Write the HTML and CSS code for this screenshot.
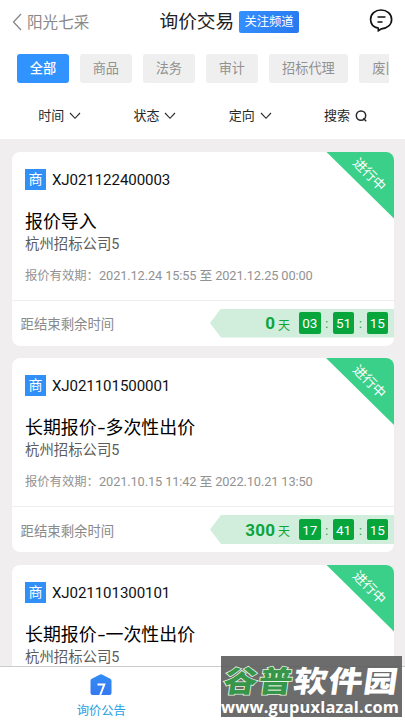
FILE: index.html
```
<!DOCTYPE html>
<html lang="zh-CN">
<head>
<meta charset="utf-8">
<title>询价交易</title>
<link rel="stylesheet" href="styles.css">
</head>
<body>
<div class="app">
  <header class="top">
    <div class="bar">
      <a class="back"><svg width="10" height="18" viewBox="0 0 10 18"><path d="M9 1 1.500 9 9 17"/></svg><span>阳光七采</span></a>
      <h1>询价交易</h1>
      <span class="follow">关注频道</span>
      <svg class="chat" width="24" height="24" viewBox="0 0 24 24"><path d="M9.200 20.200C4.700 19.200 1.600 15.900 1.600 11.500 1.600 6 6.200 2 12 2s10.600 4 10.600 9.500c0 5.200-4.200 8.700-10.200 9.300l-3 1.900z"/><path d="M8.500 9h8M8.500 14h5"/></svg>
    </div>
    <nav class="tabs">
      <span class="tab on">全部</span><span class="tab">商品</span><span class="tab">法务</span><span class="tab">审计</span><span class="tab wide">招标代理</span><span class="tab wide">废旧物资</span>
    </nav>
    <div class="filters">
      <span>时间<svg width="12" height="8" viewBox="0 0 12 8"><path d="m1 1 5 5.300L11 1"/></svg></span>
      <span>状态<svg width="12" height="8" viewBox="0 0 12 8"><path d="m1 1 5 5.300L11 1"/></svg></span>
      <span>定向<svg width="12" height="8" viewBox="0 0 12 8"><path d="m1 1 5 5.300L11 1"/></svg></span>
      <span>搜索<svg class="find" width="12" height="12" viewBox="0 0 12 12"><circle cx="6" cy="5.600" r="4.700"/><path d="m8.300 8.300 2.900 2.900"/></svg></span>
    </div>
  </header>
  <main class="list">
    <article class="card">
      <div class="ribbon"><span>进行中</span></div>
      <div class="info">
        <div class="code"><i>商</i><b>XJ021122400003</b></div>
        <h2>报价导入</h2>
        <p class="org">杭州招标公司5</p>
        <p class="valid"><span>报价有效期：</span>2021.12.24 15:55 至 2021.12.25 00:00</p>
      </div>
      <div class="remain"><span class="label">距结束剩余时间</span>
        <div class="count"><strong>0</strong><em>天</em><u>03</u><s>:</s><u>51</u><s>:</s><u>15</u></div>
      </div>
    </article>
    <article class="card">
      <div class="ribbon"><span>进行中</span></div>
      <div class="info">
        <div class="code"><i>商</i><b>XJ021101500001</b></div>
        <h2>长期报价<span class="dash">-</span>多次性出价</h2>
        <p class="org">杭州招标公司5</p>
        <p class="valid"><span>报价有效期：</span>2021.10.15 11:42 至 2022.10.21 13:50</p>
      </div>
      <div class="remain"><span class="label">距结束剩余时间</span>
        <div class="count"><strong>300</strong><em>天</em><u>17</u><s>:</s><u>41</u><s>:</s><u>15</u></div>
      </div>
    </article>
    <article class="card">
      <div class="ribbon"><span>进行中</span></div>
      <div class="info">
        <div class="code"><i>商</i><b>XJ021101300101</b></div>
        <h2>长期报价<span class="dash">-</span>一次性出价</h2>
        <p class="org">杭州招标公司5</p>
      </div>
    </article>
  </main>
  <footer class="bottom">
    <div class="item">
      <svg width="22" height="22" viewBox="0 0 22 22"><defs><linearGradient id="g" x1="0" y1="0" x2="0" y2="1"><stop stop-color="#328cf4"/><stop offset="1" stop-color="#3579f0"/></linearGradient></defs><path fill="url(#g)" d="M9.500.7q1.500-.9 3 0l7.700 4q1.300.7 1.300 2v12.300q0 2-2 2h-17q-2 0-2-2V6.700q0-1.300 1.300-2z"/><path d="M7.500 10.500h6.800L10.200 21" fill="none" stroke="#fff" stroke-width="2"/></svg>
      <span>询价公告</span>
    </div>
    <div class="item dim"><span>成交公告</span></div>
  </footer>
  <div class="mark">
    <div class="name"><span>谷普</span>软件园</div>
    <div class="url">www.gupuxlazal.com</div>
  </div>
</div>
</body>
</html>
```
FILE: styles.css
```
* { box-sizing: border-box; }
body { margin: 0; background: #f0eeef; font-family: Roboto, "Noto Sans CJK SC", sans-serif; color: #222; }
h1, h2, p { margin: 0; font-weight: 400; }
i, em, u, s { font-style: normal; text-decoration: none; }
svg { fill: none; stroke: currentColor; flex: none; }
.app { position: relative; width: 405px; height: 720px; overflow: hidden; display: flex; flex-direction: column; }
.top { height: 139px; flex: none; background: #fff; }
.bar { height: 44px; display: flex; align-items: center; padding: 0 12px; white-space: nowrap; }
.back { display: flex; align-items: center; gap: 5px; width: 147.500px; font-size: 15.600px; color: #888; }
.back svg { stroke-width: 1.300; }
.back span { margin-top: -2px; }
.bar h1 { font-size: 18.700px; width: 79.500px; line-height: 44px; }
.follow { width: 60px; height: 22px; line-height: 23px; border-radius: 2px; text-align: center; font-size: 12.300px; color: #fff; background: linear-gradient(110deg, #3490ff, #2878ef); }
.chat { margin: -5px 0 0 auto; stroke: #111; stroke-width: 1.700; }
.tabs { display: flex; gap: 11.200px; margin: 10px 16px 0 17px; overflow: hidden; }
.tab { flex: none; width: 51.800px; height: 29px; line-height: 30px; border-radius: 3px; background: #efefef; color: #919191; text-align: center; font-size: 13.200px; }
.tab.wide { width: 79px; }
.tab.on { background: #3093ff; color: #fff; font-weight: 500; }
.filters { display: grid; grid-template-columns: repeat(4, 95.300px); margin: 23px 12px 0; height: 20px; line-height: 20px; font-size: 13px; color: #282828; }
.filters span { display: flex; align-items: center; justify-content: center; gap: 5px; }
.filters svg { stroke-width: 1.100; }
.filters .find { stroke-width: 1.500; }
.list { flex: 1; min-height: 0; overflow: hidden; display: flex; flex-direction: column; gap: 12.500px; padding: 12.500px 11px 0 12px; }
.card { position: relative; flex: none; height: 194px; border-radius: 8px; background: #fff; overflow: hidden; }
.ribbon { position: absolute; top: 0; right: 0; width: 68px; height: 67px; clip-path: polygon(0 0, 100% 0, 100% 100%); background: #3bd089; color: #fff; }
.ribbon span { position: absolute; left: 21px; top: 13.500px; width: 44px; line-height: 20px; text-align: center; font-size: 13.300px; transform: rotate(45deg); }
.info { height: 149px; padding: 16px 0 0 13px; border-bottom: 1px solid #eee; }
.code { display: flex; align-items: center; gap: 6px; height: 23px; }
.code i { width: 21px; height: 21px; line-height: 21px; text-align: center; background: #3190f8; color: #fff; font-size: 14px; }
.code b { font-weight: 400; font-size: 15.100px; letter-spacing: -.1px; line-height: 22px; padding-top: 1px; color: #111; }
.info h2 { margin-top: 17px; height: 26px; line-height: 27px; font-size: 17.900px; color: #000; }
.dash { display: inline-block; width: 9px; text-align: center; transform: scaleX(1.500); }
.org { height: 22px; line-height: 22px; font-size: 14.400px; color: #5c5c5c; }
.valid { display: flex; margin-top: 10px; height: 20px; line-height: 20px; font-size: 12.800px; letter-spacing: -.12px; color: #929292; white-space: pre; }
.valid span { width: 74px; font-size: 12.300px; letter-spacing: 0; }
.remain { height: 45px; display: flex; align-items: center; justify-content: space-between; padding-left: 8.500px; }
.label { font-size: 13.400px; color: #8a8a8a; }
.count { width: 184px; height: 29px; display: flex; align-items: center; justify-content: flex-end; padding-right: 6px; background: #d1eedc; clip-path: polygon(0 50%, 11px 0, 100% 0, 100% 100%, 11px 100%); color: #0ca53c; font-size: 12px; }
.count strong { font-size: 17px; font-weight: 700; letter-spacing: .2px; }
.count em { margin: 2px 9px 0 3px; }
.count u { width: 21.500px; height: 21.500px; line-height: 23px; border-radius: 2px; background: #06a63d; color: #fff; text-align: center; font-size: 13.500px; }
.count s { width: 12.200px; text-align: center; padding-top: 2px; }
.bottom { height: 54px; flex: none; display: flex; background: #fff; border-top: 1px solid #ccc; }
.item { width: 50%; display: flex; flex-direction: column; align-items: center; padding-top: 7px; color: #25a0e2; font-size: 12.300px; }
.item svg { stroke: none; }
.item span { margin-top: 6px; line-height: 18px; }
.dim { color: #777; padding: 27px 0 0 12px; }
.mark { position: absolute; left: 221px; top: 656px; width: 181px; height: 61px; background: rgba(92, 92, 92, .9); color: #fff; white-space: nowrap; }
.name { margin-top: 4px; height: 39px; font: 900 34px/39px "Noto Sans CJK SC", sans-serif; letter-spacing: 1px; padding-left: 3px; transform: skewX(-8deg) scaleY(.87); }
.name span { color: #37964a; -webkit-text-stroke: 1.800px #e3f5e3; paint-order: stroke fill; }
.url { height: 16px; line-height: 16px; font-family: "Open Sans", sans-serif; font-size: 16.400px; font-weight: 700; letter-spacing: .2px; }
```
